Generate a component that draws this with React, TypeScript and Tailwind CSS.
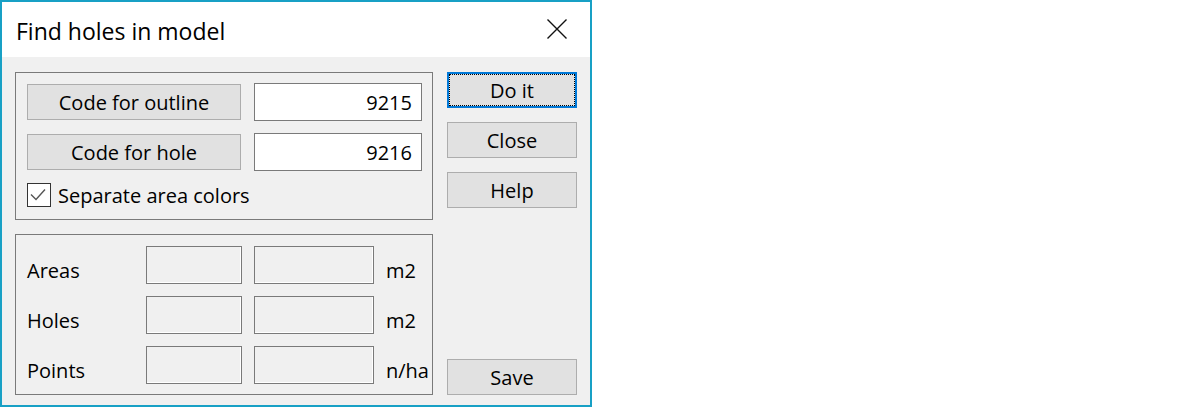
import React from "react";

const font = { fontFamily: '"Open Sans", "Noto Sans", sans-serif' };

function Btn({ children, focus = false }: { children: React.ReactNode; focus?: boolean }) {
  if (focus) {
    return (
      <div className="h-[36px] w-[130px] border-2 border-[#0078d7] bg-[#e1e1e1] flex">
        <div className="flex-1 border border-dotted border-black flex items-center justify-center pt-[2px] text-[20px] text-black">
          {children}
        </div>
      </div>
    );
  }
  return (
    <div className="h-[36px] w-[130px] border border-[#adadad] bg-[#e1e1e1] flex items-center justify-center pt-[2px] text-[20px] text-black">
      {children}
    </div>
  );
}

function Field({ w }: { w: string }) {
  return (
    <div
      className={`${w} h-[38px] border border-[#7a7a7a] bg-[#f0f0f0] shadow-[inset_-1px_-1px_0_#ffffff]`}
    />
  );
}

function ResultRow({ label, unit }: { label: string; unit: string }) {
  return (
    <div className="flex h-[38px]">
      <div className="w-[119px] pt-[11px] leading-[28px] text-[20px]">{label}</div>
      <Field w="w-[96px]" />
      <div className="w-[12px]" />
      <Field w="w-[120px]" />
      <div className="pl-[12px] pt-[11px] leading-[28px] text-[20px]">{unit}</div>
    </div>
  );
}

export default function App() {
  return (
    <div className="w-[1200px] h-[407px] bg-white flex" style={font}>
      <div className="w-[592px] h-[407px] border-2 border-[#18a0c5] flex flex-col text-black">
        {/* Title bar */}
        <div className="h-[55px] bg-white flex items-center justify-between pl-[14px] pr-[23px]">
          <div className="text-[23px] pt-[2px] leading-[30px]">Find holes in model</div>
          <svg width="20" height="20" viewBox="0 0 20 20" className="-mt-[1px]">
            <path d="M0.5 0.5 L19.5 19.5 M19.5 0.5 L0.5 19.5" stroke="#111" strokeWidth="1.4" fill="none" />
          </svg>
        </div>
        {/* Body */}
        <div className="flex-1 bg-[#f0f0f0] flex pl-[13px] pt-[15px] gap-[14px]">
          <div className="w-[418px] flex flex-col gap-[14px]">
            {/* Group 1 */}
            <div className="h-[148px] border border-[#7a7a7a] pl-[11px] pt-[10px] flex flex-col gap-[12px]">
              <div className="flex items-center gap-[13px] h-[38px]">
                <div className="w-[214px] h-[36px] border border-[#adadad] bg-[#e1e1e1] flex items-center justify-center pt-[2px] text-[20px]">
                  Code for outline
                </div>
                <div className="w-[168px] h-[38px] border border-[#7a7a7a] bg-white flex items-center justify-end pr-[9px] pt-[2px] text-[20px]">
                  9215
                </div>
              </div>
              <div className="flex items-center gap-[13px] h-[38px]">
                <div className="w-[214px] h-[36px] border border-[#adadad] bg-[#e1e1e1] flex items-center justify-center pt-[2px] text-[20px]">
                  Code for hole
                </div>
                <div className="w-[168px] h-[38px] border border-[#7a7a7a] bg-white flex items-center justify-end pr-[9px] pt-[2px] text-[20px]">
                  9216
                </div>
              </div>
              <div className="flex items-center h-[24px] gap-[7px]">
                <div className="w-[24px] h-[24px] border border-[#333333] bg-white flex items-center justify-center">
                  <svg width="22" height="22" viewBox="0 0 22 22">
                    <path d="M3 10.5 L8 15.5 L17 5.5" stroke="#555" strokeWidth="1.4" fill="none" />
                  </svg>
                </div>
                <div className="text-[20px] leading-[28px] pt-[2px]">Separate area colors</div>
              </div>
            </div>
            {/* Group 2 */}
            <div className="h-[161px] border border-[#7a7a7a] pl-[11px] pt-[11px] flex flex-col gap-[12px]">
              <ResultRow label="Areas" unit="m2" />
              <ResultRow label="Holes" unit="m2" />
              <ResultRow label="Points" unit="n/ha" />
            </div>
          </div>
          {/* Right buttons */}
          <div className="w-[130px] h-[323px] flex flex-col gap-[14px]">
            <Btn focus>Do it</Btn>
            <Btn>Close</Btn>
            <Btn>Help</Btn>
            <div className="mt-auto">
              <Btn>Save</Btn>
            </div>
          </div>
        </div>
      </div>
      <div className="flex-1 bg-white" />
    </div>
  );
}
